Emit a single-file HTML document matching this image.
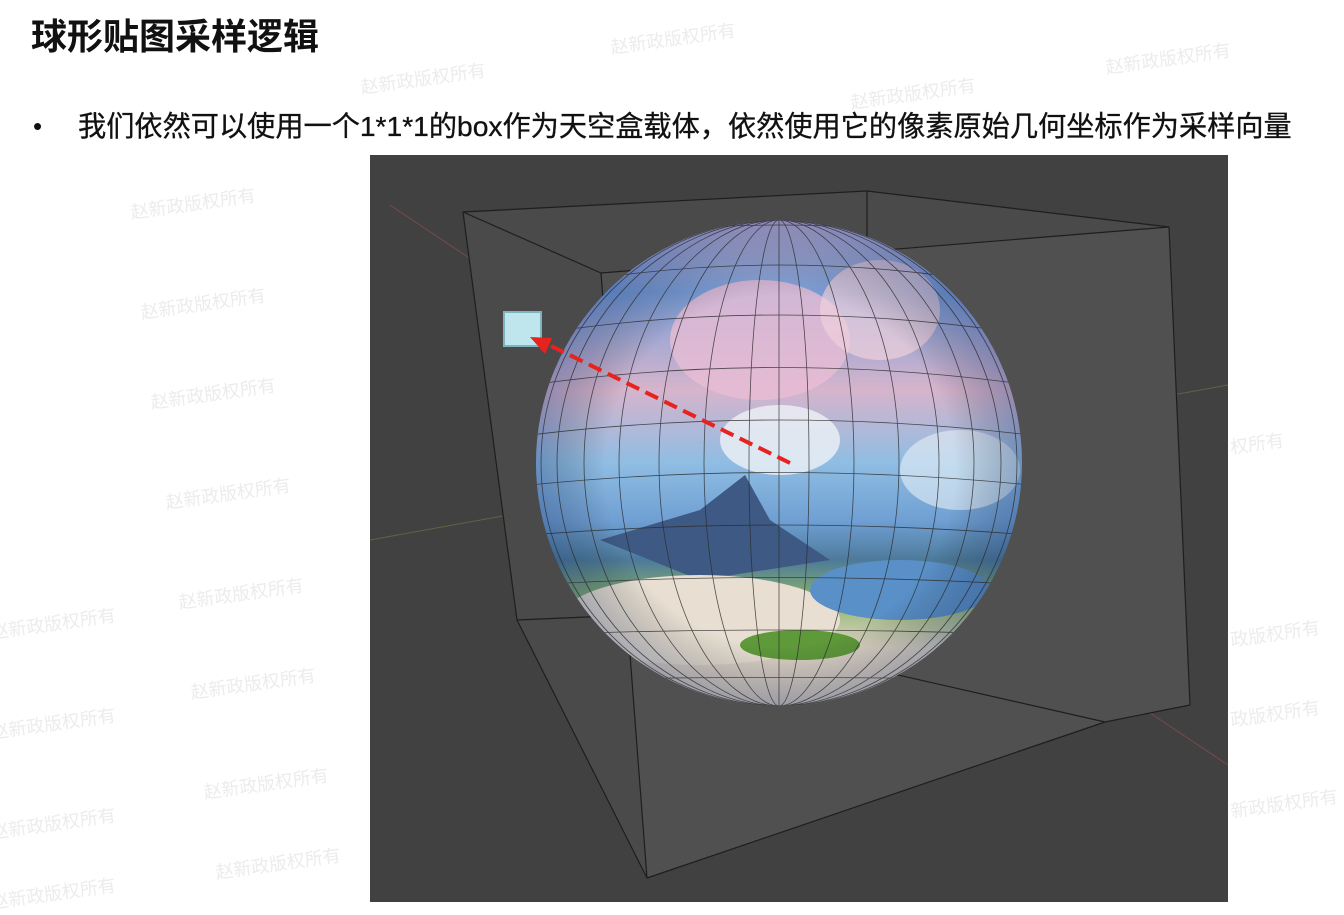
<!DOCTYPE html>
<html><head><meta charset="utf-8"><style>
body{margin:0;width:1344px;height:908px;background:#fff;position:relative;overflow:hidden;font-family:"Liberation Sans","Noto Sans CJK SC",sans-serif}
.t{position:absolute;left:31px;top:15px;font-size:36px;font-weight:bold;color:#111;line-height:44px}
.b{position:absolute;left:33px;top:108px;font-size:26px;color:#111;line-height:36px}
.tx{position:absolute;left:78px;top:108px;font-size:28.2px;color:#111;white-space:nowrap;line-height:36px;-webkit-text-stroke:0.3px #111}
.w{position:absolute;color:#ececec;font-size:18px;transform:rotate(-8deg);white-space:nowrap}
</style></head><body>
<div class="w" style="left:610px;top:25px">赵新政版权所有</div>
<div class="w" style="left:360px;top:65px">赵新政版权所有</div>
<div class="w" style="left:850px;top:80px">赵新政版权所有</div>
<div class="w" style="left:1105px;top:45px">赵新政版权所有</div>
<div class="w" style="left:130px;top:190px">赵新政版权所有</div>
<div class="w" style="left:140px;top:290px">赵新政版权所有</div>
<div class="w" style="left:150px;top:380px">赵新政版权所有</div>
<div class="w" style="left:165px;top:480px">赵新政版权所有</div>
<div class="w" style="left:178px;top:580px">赵新政版权所有</div>
<div class="w" style="left:190px;top:670px">赵新政版权所有</div>
<div class="w" style="left:203px;top:770px">赵新政版权所有</div>
<div class="w" style="left:215px;top:850px">赵新政版权所有</div>
<div class="w" style="left:-10px;top:610px">赵新政版权所有</div>
<div class="w" style="left:-10px;top:710px">赵新政版权所有</div>
<div class="w" style="left:-10px;top:810px">赵新政版权所有</div>
<div class="w" style="left:-10px;top:880px">赵新政版权所有</div>
<div class="w" style="left:1230px;top:430px">权所有</div>
<div class="w" style="left:1230px;top:620px">政版权所有</div>
<div class="w" style="left:1230px;top:700px">政版权所有</div>
<div class="w" style="left:1230px;top:790px">新政版权所有</div>
<div class="t">球形贴图采样逻辑</div>
<div class="b">•</div>
<div class="tx">我们依然可以使用一个1*1*1的box作为天空盒载体，依然使用它的像素原始几何坐标作为采样向量</div>
<svg style="position:absolute;left:370px;top:155px" width="858" height="747" viewBox="370 155 858 747">
<defs>
<linearGradient id="sk" x1="0" y1="0" x2="0" y2="1">
<stop offset="0" stop-color="#c9b6d6"/><stop offset="0.15" stop-color="#7a9fd8"/>
<stop offset="0.35" stop-color="#d6b4cc"/><stop offset="0.5" stop-color="#8fbde3"/>
<stop offset="0.62" stop-color="#6f9fd3"/><stop offset="0.7" stop-color="#4d7a9a"/>
<stop offset="0.78" stop-color="#8ab26a"/><stop offset="0.88" stop-color="#e0d6c8"/>
<stop offset="1" stop-color="#d2c8c0"/></linearGradient>
<radialGradient id="sh" cx="0.5" cy="0.5" r="0.5"><stop offset="0.7" stop-color="#000" stop-opacity="0"/><stop offset="1" stop-color="#1a3a80" stop-opacity="0.35"/></radialGradient>
<clipPath id="c"><circle cx="779" cy="463" r="243"/></clipPath>
</defs>
<rect x="370" y="155" width="858" height="747" fill="#414141"/>
<line x1="390" y1="205" x2="1228" y2="765" stroke="#7a4a4a" stroke-width="1"/>
<line x1="370" y1="540" x2="1228" y2="385" stroke="#5c6448" stroke-width="1"/>
<polygon points="463,212 867,191 1169,227 1190,705 1105,722 647,878 517,620" fill="#4a4a4a"/>
<polygon points="601,273 1169,227 1190,705 1105,722 647,878" fill="#505050"/>
<g stroke="#1e1e1e" stroke-width="1.2" fill="none">
<polyline points="463,212 867,191 1169,227"/>
<line x1="463" y1="212" x2="601" y2="273"/>
<line x1="601" y1="273" x2="1169" y2="227"/>
<line x1="463" y1="212" x2="517" y2="620"/>
<line x1="601" y1="273" x2="647" y2="878"/>
<line x1="517" y1="620" x2="647" y2="878"/>
<line x1="517" y1="620" x2="634" y2="615"/>
<line x1="634" y1="615" x2="1105" y2="722"/>
<line x1="647" y1="878" x2="1105" y2="722"/>
<line x1="1169" y1="227" x2="1190" y2="705"/>
<line x1="1105" y1="722" x2="1190" y2="705"/>
<line x1="867" y1="191" x2="867" y2="240"/>
</g>
<circle cx="779" cy="463" r="243" fill="url(#sk)"/>
<g clip-path="url(#c)">
<ellipse cx="760" cy="340" rx="90" ry="60" fill="#e8bdd4" opacity="0.8"/>
<ellipse cx="880" cy="310" rx="60" ry="50" fill="#f0d0dc" opacity="0.7"/>
<ellipse cx="780" cy="440" rx="60" ry="35" fill="#eef2f6" opacity="0.8"/>
<ellipse cx="960" cy="470" rx="60" ry="40" fill="#e8f0f6" opacity="0.6"/>
<polygon points="600,540 700,510 745,475 770,520 830,560 700,580" fill="#3e5a84"/>
<ellipse cx="700" cy="620" rx="140" ry="45" fill="#e8dfd2"/>
<ellipse cx="900" cy="590" rx="90" ry="30" fill="#5a90c8"/>
<ellipse cx="800" cy="645" rx="60" ry="15" fill="#5f9a3a"/>
<rect x="530" y="220" width="500" height="500" fill="url(#sh)"/>
<g stroke="#2a2a2a" stroke-width="0.8" fill="none" opacity="0.8">
<ellipse cx="779" cy="463" rx="30" ry="243"/><ellipse cx="779" cy="463" rx="75" ry="243"/>
<ellipse cx="779" cy="463" rx="120" ry="243"/><ellipse cx="779" cy="463" rx="160" ry="243"/>
<ellipse cx="779" cy="463" rx="195" ry="243"/><ellipse cx="779" cy="463" rx="222" ry="243"/>
<ellipse cx="779" cy="463" rx="238" ry="243"/>
<line x1="779" y1="220" x2="779" y2="706"/>
<path d="M530,290 Q779,240 1030,290"/><path d="M530,335 Q779,295 1030,335"/>
<path d="M530,385 Q779,350 1030,385"/><path d="M530,435 Q779,405 1030,435"/>
<path d="M530,485 Q779,460 1030,485"/><path d="M530,535 Q779,515 1030,535"/>
<path d="M530,585 Q779,570 1030,585"/><path d="M530,635 Q779,625 1030,635"/>
<path d="M530,680 Q779,675 1030,680"/><path d="M530,250 Q779,200 1030,250"/>
</g></g>
<rect x="504" y="312" width="37" height="34" fill="#bfe6ec" stroke="#7fb3bf" stroke-width="2"/>
<line x1="790" y1="463" x2="545" y2="343" stroke="#e8231e" stroke-width="4" stroke-dasharray="14,7"/>
<polygon points="530,337 552,338 545,354" fill="#e8231e"/>
</svg>
</body></html>
